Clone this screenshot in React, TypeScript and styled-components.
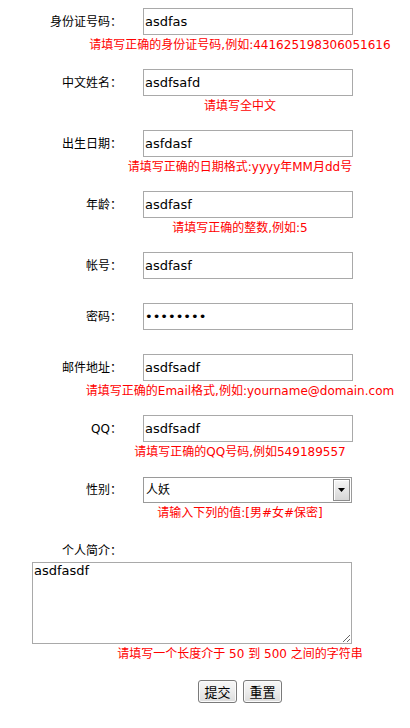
import React from 'react';
import styled, { createGlobalStyle } from 'styled-components';

const GlobalStyle = createGlobalStyle`
    html, body {
        margin: 0;
        padding: 0;
        background: #ffffff;
    }
    body {
        font-family: 'DejaVu Sans', 'Noto Sans CJK SC', sans-serif;
        font-size: 12px;
        color: #000000;
    }
`;

const Form = styled.form`
    width: 410px;
    padding-top: 8px;
    display: flex;
    flex-direction: column;
`;

const FieldBlock = styled.div<{ $bottom: number }>`
    display: flex;
    flex-direction: column;
    padding-bottom: ${(props) => props.$bottom}px;
`;

const FieldRow = styled.div<{ $height?: number }>`
    display: grid;
    grid-template-columns: 122px 210px;
    column-gap: 21px;
    align-items: center;
    height: ${(props) => props.$height ?? 27}px;
`;

const Label = styled.label`
    text-align: right;
    font-size: 12px;
    line-height: 16px;
    white-space: nowrap;
`;

const TextInput = styled.input`
    box-sizing: border-box;
    width: 210px;
    height: 27px;
    margin: 0;
    padding: 0 1px;
    border: 1px solid #a9a9a9;
    border-radius: 0;
    outline: none;
    font-family: 'DejaVu Sans', 'Noto Sans CJK SC', sans-serif;
    font-size: 13px;
    color: #000000;
    background: #ffffff;
`;

const SelectBox = styled.div`
    position: relative;
    box-sizing: border-box;
    width: 209px;
    height: 26px;
    border: 1px solid #9a9a9a;
    background: #ffffff;
`;

const Select = styled.select`
    appearance: none;
    width: 100%;
    height: 100%;
    margin: 0;
    padding: 0 0 0 2px;
    border: none;
    outline: none;
    background: transparent;
    font-family: 'DejaVu Sans', 'Noto Sans CJK SC', sans-serif;
    font-size: 12px;
    color: #000000;
`;

const DropButton = styled.span`
    position: absolute;
    top: 1px;
    right: 1px;
    bottom: 1px;
    width: 17px;
    box-sizing: border-box;
    border: 1px solid #8c8c8c;
    box-shadow: inset 1px 1px 0 #ffffff;
    background: linear-gradient(#f6f6f6, #d6d6d6);
    display: flex;
    align-items: center;
    justify-content: center;
    pointer-events: none;
`;

const ErrorText = styled.div`
    width: 340px;
    margin-left: 70px;
    margin-top: 2px;
    text-align: center;
    white-space: nowrap;
    color: #ff0000;
    font-size: 12px;
    line-height: 16px;
`;

const TextArea = styled.textarea`
    box-sizing: border-box;
    width: 320px;
    height: 82px;
    margin: 3px 0 0 32px;
    padding: 0 1px;
    border: 1px solid #a9a9a9;
    border-radius: 0;
    outline: none;
    font-family: 'DejaVu Sans', 'Noto Sans CJK SC', sans-serif;
    font-size: 13px;
    line-height: 16px;
    color: #000000;
`;

const ButtonBar = styled.div`
    width: 340px;
    margin: 18px 0 0 70px;
    display: flex;
    justify-content: center;
    gap: 6px;
`;

const FormButton = styled.button`
    box-sizing: border-box;
    width: 39px;
    height: 23px;
    padding: 0;
    border: 1px solid #7a7a7a;
    border-radius: 3px;
    background: linear-gradient(#f7f7f7 0%, #ececec 50%, #dcdcdc 100%);
    box-shadow: inset 0 0 0 1px #fbfbfb;
    font-family: 'Noto Sans CJK SC', sans-serif;
    font-size: 13px;
    line-height: 20px;
    color: #000000;
`;

type Field = {
    label: string;
    value: string;
    type?: string;
    error?: string;
};

const fields: Field[] = [
    { label: '身份证号码：', value: 'asdfas', error: '请填写正确的身份证号码,例如:441625198306051616' },
    { label: '中文姓名：', value: 'asdfsafd', error: '请填写全中文' },
    { label: '出生日期：', value: 'asfdasf', error: '请填写正确的日期格式:yyyy年MM月dd号' },
    { label: '年龄：', value: 'asdfasf', error: '请填写正确的整数,例如:5' },
    { label: '帐号：', value: 'asdfasf' },
    { label: '密码：', value: '12345678', type: 'password' },
    { label: '邮件地址：', value: 'asdfsadf', error: '请填写正确的Email格式,例如:yourname@domain.com' },
    { label: 'QQ：', value: 'asdfsadf', error: '请填写正确的QQ号码,例如549189557' },
];

const ArrowIcon = () => (
    <svg width="7" height="4" viewBox="0 0 7 4">
        <path d="M0 0 H7 L3.5 4 Z" fill="#000000" />
    </svg>
);

export default function App() {
    return (
        <>
            <GlobalStyle />
            <Form onSubmit={(e) => e.preventDefault()}>
                {fields.map((field) => (
                    <FieldBlock key={field.label} $bottom={field.error ? 16 : 24}>
                        <FieldRow>
                            <Label>{field.label}</Label>
                            <TextInput type={field.type || 'text'} defaultValue={field.value} />
                        </FieldRow>
                        {field.error && <ErrorText>{field.error}</ErrorText>}
                    </FieldBlock>
                ))}
                <FieldBlock $bottom={22}>
                    <FieldRow>
                        <Label>性别：</Label>
                        <SelectBox>
                            <Select defaultValue="人妖">
                                <option>男</option>
                                <option>女</option>
                                <option>人妖</option>
                            </Select>
                            <DropButton>
                                <ArrowIcon />
                            </DropButton>
                        </SelectBox>
                    </FieldRow>
                    <ErrorText>请输入下列的值:[男#女#保密]</ErrorText>
                </FieldBlock>
                <FieldRow $height={16}>
                    <Label>个人简介：</Label>
                </FieldRow>
                <TextArea defaultValue="asdfasdf" />
                <ErrorText>请填写一个长度介于 50 到 500 之间的字符串</ErrorText>
                <ButtonBar>
                    <FormButton type="submit">提交</FormButton>
                    <FormButton type="reset">重置</FormButton>
                </ButtonBar>
            </Form>
        </>
    );
}
